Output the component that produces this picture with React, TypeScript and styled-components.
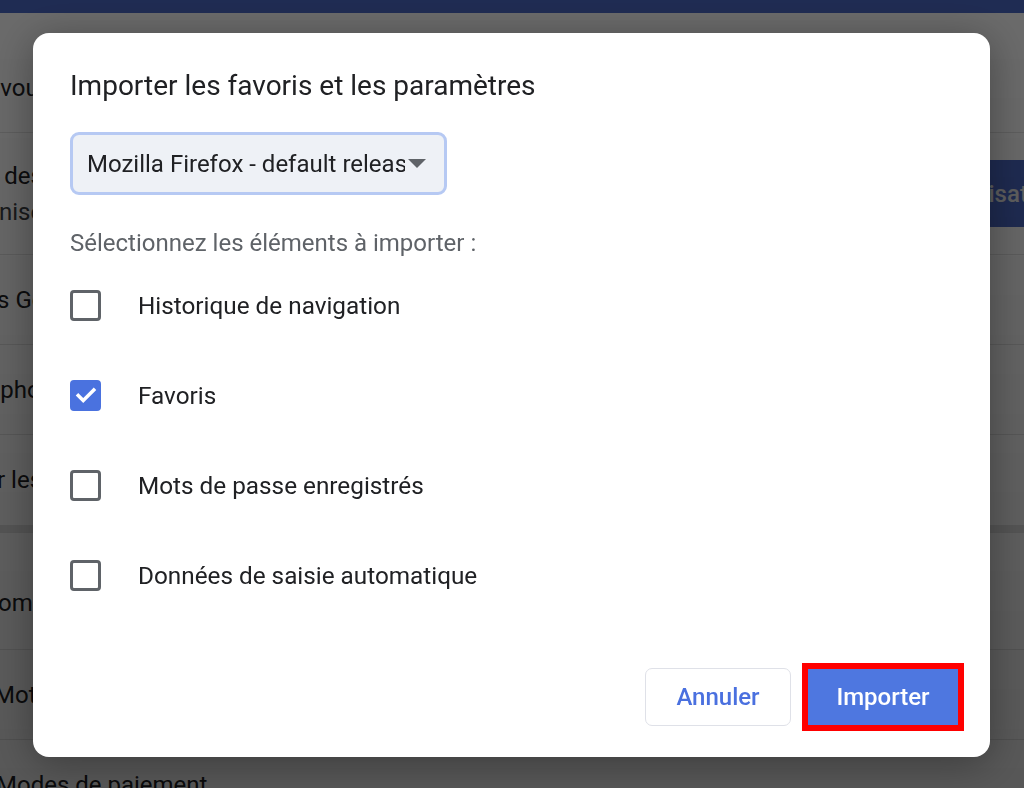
import styled, { createGlobalStyle } from "styled-components";

const GlobalStyle = createGlobalStyle`
  html, body {
    margin: 0;
    padding: 0;
    width: 100%;
    height: 100%;
    overflow: hidden;
    background: #ffffff;
    font-family: Roboto, "Liberation Sans", Arial, sans-serif;
  }
`;

/* settings page behind the modal */

const Page = styled.div`
  width: 1024px;
  height: 788px;
  overflow: hidden;
  background: #e2e2e2;
`;

const TopBar = styled.div`
  height: 13px;
  background: #4b69c6;
`;

const SettingsCard = styled.div`
  background: #ffffff;
  margin-bottom: 8px;
`;

const SettingsRow = styled.div<{ $h: number; $padTop?: number; $last?: boolean }>`
  height: ${(p) => p.$h}px;
  box-sizing: border-box;
  padding-top: ${(p) => p.$padTop ?? 0}px;
  display: flex;
  align-items: center;
  justify-content: space-between;
  border-bottom: ${(p) => (p.$last ? "none" : "1px solid #e3e3e3")};
`;

const RowText = styled.div<{ $shift: number }>`
  margin-left: ${(p) => -p.$shift}px;
  font-size: 24px;
  line-height: 36px;
  color: #202124;
  white-space: nowrap;
`;

const RowSub = styled.div`
  margin-left: -42px;
  color: #3c4043;
`;

const SyncButton = styled.div`
  margin-right: -61px;
  height: 67px;
  padding: 0 24px;
  display: flex;
  align-items: center;
  background: #4b69c6;
  color: #e8e8e8;
  font-size: 24px;
  font-weight: 500;
  white-space: nowrap;
`;

const Backdrop = styled.div`
  position: fixed;
  inset: 0;
  background: linear-gradient(180deg, rgba(0, 0, 0, 0.58) 0%, rgba(0, 0, 0, 0.66) 100%);
`;

/* import dialog */

const Dialog = styled.div`
  position: fixed;
  left: 33px;
  top: 33px;
  width: 957px;
  height: 724px;
  box-sizing: border-box;
  padding: 37px 26px 31px 37px;
  background: #ffffff;
  border-radius: 16px;
  box-shadow: 0 6px 40px rgba(0, 0, 0, 0.35);
  display: flex;
  flex-direction: column;
`;

const Title = styled.h2`
  margin: 0;
  font-size: 28px;
  line-height: 32px;
  font-weight: 400;
  color: #202124;
`;

const SelectBox = styled.div`
  margin-top: 30px;
  width: 377px;
  height: 63px;
  box-sizing: border-box;
  border: 3px solid #b6c9f3;
  border-radius: 9px;
  background: #eef1f6;
  padding: 0 18px 0 14px;
  display: flex;
  align-items: center;
  gap: 3px;
`;

const SelectValue = styled.span`
  flex: 1;
  overflow: hidden;
  white-space: nowrap;
  font-size: 24px;
  color: #202124;
`;

const Caret = styled.span`
  width: 0;
  height: 0;
  border-left: 9px solid transparent;
  border-right: 9px solid transparent;
  border-top: 9px solid #5f6368;
`;

const Hint = styled.div`
  margin-top: 34px;
  margin-bottom: 3px;
  font-size: 24px;
  line-height: 28px;
  color: #5f6368;
`;

const OptionRow = styled.label`
  height: 90px;
  display: flex;
  align-items: center;
  gap: 37px;
  font-size: 24.3px;
  color: #202124;
`;

const Box = styled.span<{ $checked?: boolean }>`
  width: 31px;
  height: 31px;
  flex-shrink: 0;
  box-sizing: border-box;
  border-radius: 4px;
  border: 3px solid ${(p) => (p.$checked ? "#4a72df" : "#5f6368")};
  background: ${(p) => (p.$checked ? "#4a72df" : "#ffffff")};
  display: flex;
  align-items: center;
  justify-content: center;
`;

const Footer = styled.div`
  margin-top: auto;
  display: flex;
  justify-content: flex-end;
  align-items: center;
  gap: 17px;
  padding-right: 6px;
`;

const Button = styled.button<{ $primary?: boolean }>`
  height: ${(p) => (p.$primary ? 56 : 58)}px;
  width: ${(p) => (p.$primary ? 150 : 146)}px;
  box-sizing: border-box;
  border-radius: ${(p) => (p.$primary ? 0 : 7)}px;
  border: ${(p) => (p.$primary ? "none" : "1.5px solid #dfe1e8")};
  background: ${(p) => (p.$primary ? "#4e77e0" : "#ffffff")};
  color: ${(p) => (p.$primary ? "#ffffff" : "#4a70df")};
  outline: ${(p) => (p.$primary ? "6px solid #ff0000" : "none")};
  font-family: inherit;
  font-size: 24px;
  font-weight: 500;
  cursor: pointer;
`;

const options = [
  { label: "Historique de navigation", checked: false },
  { label: "Favoris", checked: true },
  { label: "Mots de passe enregistrés", checked: false },
  { label: "Données de saisie automatique", checked: false },
];

const Check = () => (
  <svg width="22" height="22" viewBox="0 0 24 24">
    <path d="M3.5 12.5l5.5 5.5L20.5 6.5" fill="none" stroke="#fff" strokeWidth="3.8" strokeLinecap="square" />
  </svg>
);

export default function App() {
  return (
    <>
      <GlobalStyle />
      <Page>
        <TopBar />
        <SettingsCard>
          <SettingsRow $h={120} $padTop={30}>
            <RowText $shift={108}>Google et vous</RowText>
          </SettingsRow>
          <SettingsRow $h={122}>
            <RowText $shift={285}>
              Synchronisez vos données des
              <RowSub>Sur tous vos appareils synchronisés</RowSub>
            </RowText>
            <SyncButton>Activer la synchronisation</SyncButton>
          </SettingsRow>
          <SettingsRow $h={90}>
            <RowText $shift={283}>Synchronisation et services Google</RowText>
          </SettingsRow>
          <SettingsRow $h={90}>
            <RowText $shift={84}>Nom et photo Chrome</RowText>
          </SettingsRow>
          <SettingsRow $h={90} $last>
            <RowText $shift={87}>Importer les favoris et les paramètres</RowText>
          </SettingsRow>
        </SettingsCard>
        <SettingsCard>
          <SettingsRow $h={117} $padTop={24}>
            <RowText $shift={106}>Saisie automatique</RowText>
          </SettingsRow>
          <SettingsRow $h={90}>
            <RowText $shift={6}>Mots de passe</RowText>
          </SettingsRow>
          <SettingsRow $h={90} $last>
            <RowText $shift={4}>Modes de paiement</RowText>
          </SettingsRow>
        </SettingsCard>
      </Page>
      <Backdrop />
      <Dialog>
        <Title>Importer les favoris et les paramètres</Title>
        <SelectBox>
          <SelectValue>Mozilla Firefox - default release</SelectValue>
          <Caret />
        </SelectBox>
        <Hint>Sélectionnez les éléments à importer :</Hint>
        {options.map((o) => (
          <OptionRow key={o.label}>
            <Box $checked={o.checked}>{o.checked && <Check />}</Box>
            {o.label}
          </OptionRow>
        ))}
        <Footer>
          <Button>Annuler</Button>
          <Button $primary>Importer</Button>
        </Footer>
      </Dialog>
    </>
  );
}
